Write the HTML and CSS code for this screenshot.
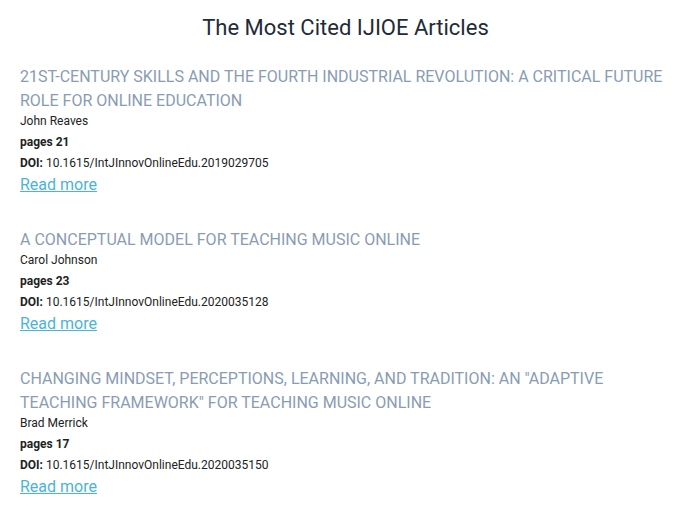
FILE: index.html
```html
<!DOCTYPE html>
<html>
<head>
<meta charset="utf-8">
<link rel="stylesheet" href="styles.css">
</head>
<body>
<div class="page">
  <h1 class="heading">The Most Cited IJIOE Articles</h1>
  <div class="list">
    <div class="article">
      <div class="title">21ST-CENTURY SKILLS AND THE FOURTH INDUSTRIAL REVOLUTION: A CRITICAL FUTURE ROLE FOR ONLINE EDUCATION</div>
      <div class="author">John Reaves</div>
      <div class="pages">pages 21</div>
      <div class="doi"><b>DOI:</b> 10.1615/IntJInnovOnlineEdu.2019029705</div>
      <a class="more" href="#">Read more</a>
    </div>
    <div class="article">
      <div class="title">A CONCEPTUAL MODEL FOR TEACHING MUSIC ONLINE</div>
      <div class="author">Carol Johnson</div>
      <div class="pages">pages 23</div>
      <div class="doi"><b>DOI:</b> 10.1615/IntJInnovOnlineEdu.2020035128</div>
      <a class="more" href="#">Read more</a>
    </div>
    <div class="article">
      <div class="title">CHANGING MINDSET, PERCEPTIONS, LEARNING, AND TRADITION: AN "ADAPTIVE TEACHING FRAMEWORK" FOR TEACHING MUSIC ONLINE</div>
      <div class="author">Brad Merrick</div>
      <div class="pages">pages 17</div>
      <div class="doi"><b>DOI:</b> 10.1615/IntJInnovOnlineEdu.2020035150</div>
      <a class="more" href="#">Read more</a>
    </div>
  </div>
</div>
</body>
</html>
```

FILE: styles.css
```css
html, body {
  margin: 0;
  padding: 0;
  background: #ffffff;
}
body {
  font-family: Roboto, "Liberation Sans", sans-serif;
  color: #222222;
}
.page {
  padding: 13px 8px 0 20px;
}
.heading {
  margin: 0;
  font-size: 22px;
  line-height: 30px;
  font-weight: 400;
  text-align: center;
  color: #1f2b38;
}
.list {
  display: flex;
  flex-direction: column;
  gap: 31px;
  margin-top: 22px;
}
.article {
  display: flex;
  flex-direction: column;
  align-items: flex-start;
}
.title {
  font-size: 16px;
  line-height: 24px;
  color: #8a9cb2;
}
.author {
  font-size: 12px;
  line-height: 16px;
}
.pages {
  font-size: 12px;
  line-height: 16px;
  margin-top: 5px;
  font-weight: 700;
}
.doi {
  font-size: 12px;
  line-height: 16px;
  margin-top: 5px;
}
.doi b {
  font-weight: 700;
}
.more {
  font-size: 16px;
  line-height: 24px;
  margin-top: 2px;
  color: #4ab4d9;
  text-decoration: underline;
}
```
